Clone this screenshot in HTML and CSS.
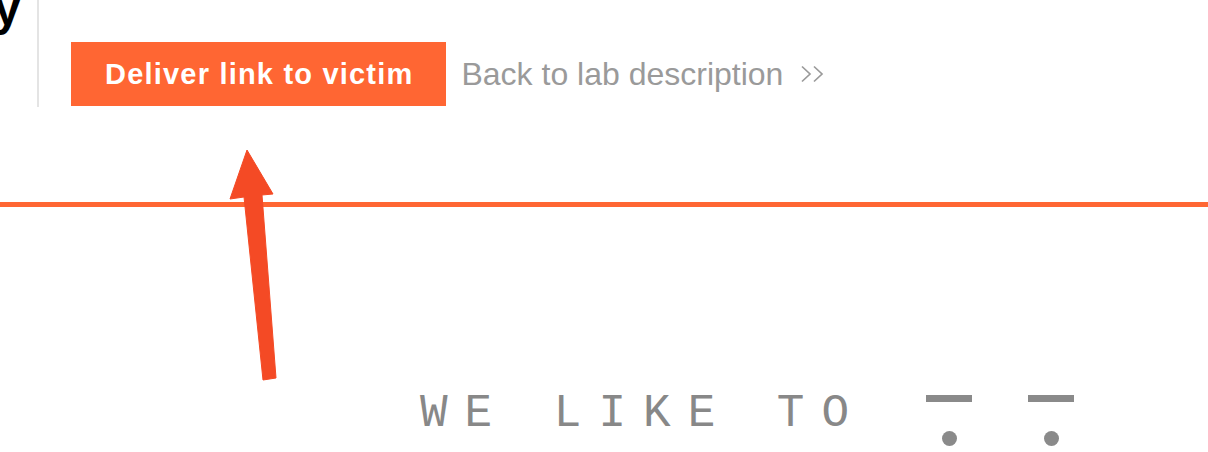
FILE: index.html
```html
<!DOCTYPE html>
<html lang="en">
<head>
<meta charset="utf-8">
<title>Lab header</title>
<link rel="stylesheet" href="styles.css">
</head>
<body>
<header class="lab-header">
  <div class="title-col"><h2 class="title">y</h2></div>
  <div class="actions">
    <a class="btn-deliver" href="#">Deliver link to victim</a>
    <a class="back-link" href="#">Back to lab description
      <svg class="chevrons" width="24" height="18" viewBox="0 0 24 18" aria-hidden="true">
        <polyline points="1,1.5 9,9 1,16.5" fill="none" stroke="#9a9a9a" stroke-width="1.7"/>
        <polyline points="13,1.5 21,9 13,16.5" fill="none" stroke="#9a9a9a" stroke-width="1.7"/>
      </svg>
    </a>
  </div>
</header>
<div class="rule"></div>
<footer class="footer">
  <span class="tagline">WE LIKE TO</span>
  <span class="mark"><span class="mark-bar"></span><span class="mark-dot"></span></span>
  <span class="mark"><span class="mark-bar"></span><span class="mark-dot"></span></span>
</footer>
<svg class="annotation" width="1208" height="452" viewBox="0 0 1208 452" aria-hidden="true">
  <polygon points="247,150 230,199 244,197 263,380 276,378 262,195 273,194" fill="#f44a25" stroke="#f44a25" stroke-width="1" stroke-linejoin="round"/>
</svg>
</body>
</html>
```
FILE: styles.css
```css
html, body {
  margin: 0;
  padding: 0;
  background: #ffffff;
}
body {
  width: 1208px;
  height: 452px;
  overflow: hidden;
  position: relative;
  font-family: "Liberation Sans", Arial, sans-serif;
}
.lab-header {
  display: flex;
  height: 107px;
}
.title-col {
  width: 37px;
  overflow: hidden;
}
.title {
  margin: -15px 0 0 -6px;
  font-size: 48px;
  line-height: 48px;
  font-weight: 700;
  color: #000;
}
.actions {
  border-left: 2px solid #e4e4e4;
  padding: 42px 0 0 32px;
  display: flex;
  align-items: flex-start;
  gap: 15px;
}
.btn-deliver {
  display: flex;
  align-items: center;
  height: 64px;
  padding: 0 33px 0 34px;
  background: #ff6633;
  color: #ffffff;
  font-weight: 700;
  font-size: 29px;
  letter-spacing: 1.2px;
  text-decoration: none;
  white-space: nowrap;
}
.back-link {
  display: flex;
  align-items: center;
  gap: 18px;
  height: 64px;
  color: #9a9a9a;
  font-size: 32px;
  text-decoration: none;
  white-space: nowrap;
}
.chevrons {
  flex-shrink: 0;
  margin-top: -1px;
}
.rule {
  margin-top: 95px;
  height: 5px;
  background: #ff6633;
}
.footer {
  display: flex;
  align-items: flex-start;
  padding: 184px 0 0 420px;
}
.tagline {
  font-family: "Liberation Mono", "Courier New", monospace;
  font-size: 46px;
  line-height: 46px;
  letter-spacing: 17px;
  color: #888888;
}
.mark {
  display: flex;
  flex-direction: column;
  align-items: center;
  width: 46px;
  margin-top: 4px;
}
.mark + .mark {
  margin-left: 56px;
}
.tagline + .mark {
  margin-left: 60px;
}
.mark-bar {
  width: 46px;
  height: 7px;
  background: #8a8a8a;
}
.mark-dot {
  width: 15px;
  height: 15px;
  margin-top: 29px;
  border-radius: 50%;
  background: #8a8a8a;
}
.annotation {
  position: absolute;
  left: 0;
  top: 0;
  pointer-events: none;
}
```
